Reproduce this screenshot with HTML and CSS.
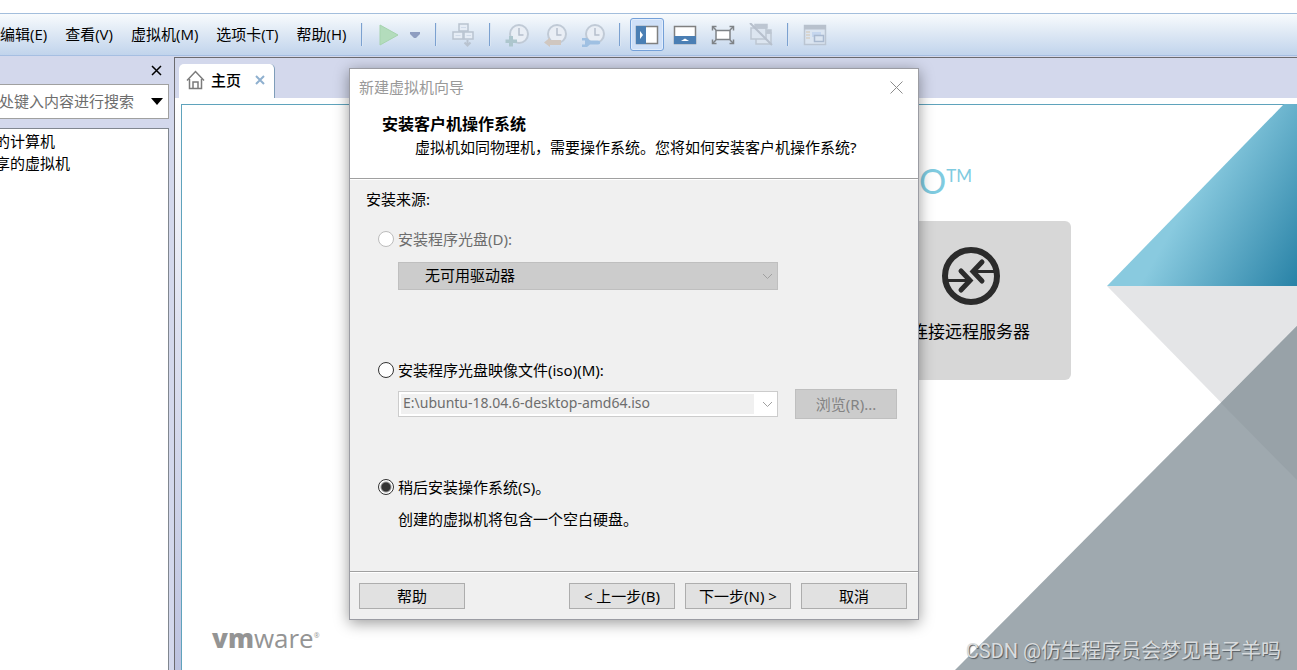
FILE: index.html
```html
<!DOCTYPE html>
<html lang="zh-CN">
<head>
<meta charset="utf-8">
<title>新建虚拟机向导</title>
<link rel="stylesheet" href="styles.css">
</head>
<body>
<div class="app">
  <header class="toolbar">
    <nav class="menu">
      <button type="button">编辑(E)</button>
      <button type="button">查看(V)</button>
      <button type="button">虚拟机(M)</button>
      <button type="button">选项卡(T)</button>
      <button type="button">帮助(H)</button>
    </nav>
    <span class="sep"></span>
    <button type="button" class="tool" aria-label="开机"><svg width="24" height="24" viewBox="0 0 24 24"><path d="M3 2L21 12L3 22Z" fill="#b3dcbc" stroke="#a6d3ae"/></svg></button>
    <button type="button" class="tool tool-caret" aria-label="电源选项"><svg width="14" height="10" viewBox="0 0 14 10"><path d="M2 2H12V4L8 8H6L2 4Z" fill="#8e9dc0"/></svg></button>
    <span class="sep"></span>
    <button type="button" class="tool" aria-label="发送按键"><svg width="24" height="24" viewBox="0 0 24 24" fill="#e6edf6" stroke="#b9c3d0" stroke-width="1.5"><rect x="8" y="1" width="9" height="7"/><rect x="2" y="9" width="10" height="7"/><rect x="13" y="9" width="9" height="7"/><path d="M16.500 17V22M13.500 19.500L16.500 22.500L19.500 19.500" fill="none" stroke-width="2"/><path d="M10 4.500H15M4.500 12.500H9.500M15.500 12.500H20" stroke="#d0dbea" stroke-width="1"/></svg></button>
    <span class="sep"></span>
    <button type="button" class="tool" aria-label="拍摄快照"><svg width="24" height="24" viewBox="0 0 24 24"><circle cx="14" cy="11" r="9" fill="#e9eef5" stroke="#c0cad6" stroke-width="2"/><path d="M14 5V12H18.500" fill="none" stroke="#b5bfcc" stroke-width="1.500"/><path d="M4 13H8V16.500H12V20H8V23.500H4V20H0.500V16.500H4Z" fill="#adc6cd"/></svg></button>
    <button type="button" class="tool" aria-label="恢复快照"><svg width="24" height="24" viewBox="0 0 24 24"><circle cx="14" cy="11" r="9" fill="#e9eef5" stroke="#c0cad6" stroke-width="2"/><path d="M14 5V12H18.500" fill="none" stroke="#b5bfcc" stroke-width="1.500"/><path d="M1 19.500L7 14.500V17H18V22H7V24Z" fill="#d0c7c0"/></svg></button>
    <button type="button" class="tool" aria-label="管理快照"><svg width="24" height="24" viewBox="0 0 24 24"><circle cx="14" cy="11" r="9" fill="#e9eef5" stroke="#c0cad6" stroke-width="2"/><path d="M14 5V12H18.500" fill="none" stroke="#b5bfcc" stroke-width="1.500"/><path d="M1 15H6L9 17.500H17C20 17.500 20 21.500 17 21.500H9L6 24H1V21.500H4V17.500H1Z" fill="#9fc0e2"/></svg></button>
    <span class="sep"></span>
    <button type="button" class="tool tool-active" aria-label="显示库"><svg width="24" height="20" viewBox="0 0 24 20"><rect x="1.500" y="1.500" width="21" height="17" fill="#fff" stroke="#808080" stroke-width="1.500"/><path d="M1 1H11V19H1Z" fill="#4b7fb4"/><path d="M5 6L8 10L5 14Z" fill="#fff"/></svg></button>
    <button type="button" class="tool" aria-label="显示缩略图"><svg width="24" height="20" viewBox="0 0 24 20"><rect x="1.500" y="1.500" width="21" height="17" fill="#fff" stroke="#808080" stroke-width="1.500"/><path d="M1 11H23V19H1Z" fill="#4b7fb4"/><path d="M8 16L12 13.500L16 16Z" fill="#fff"/></svg></button>
    <button type="button" class="tool" aria-label="全屏"><svg width="24" height="20" viewBox="0 0 24 20" fill="none" stroke="#7f8387" stroke-width="1.500"><rect x="5" y="5.500" width="14" height="9" fill="#fff"/><path d="M1.500 5.500V1.500H5.500M18.500 1.500H22.500V5.500M22.500 14.500V18.500H18.500M5.500 18.500H1.500V14.500"/><path d="M2 2L5 5M22 2L19 5M22 18L19 15M2 18L5 15"/></svg></button>
    <button type="button" class="tool" aria-label="Unity"><svg width="24" height="24" viewBox="0 0 24 24" fill="#dce5f0" stroke="#bdc6d2" stroke-width="1.500"><rect x="7" y="10" width="15" height="11"/><rect x="2" y="5" width="15" height="11"/><path d="M6 1.500H18V5H6ZM18 7H22V10H18Z" fill="#bdc6d2"/><path d="M1 0L23 22" stroke="#b7c0cd" stroke-width="2"/></svg></button>
    <span class="sep"></span>
    <button type="button" class="tool" aria-label="控制台视图"><svg width="24" height="22" viewBox="0 0 24 22"><rect x="1.500" y="1.500" width="21" height="19" fill="#dbe5f1" stroke="#bbc5d2" stroke-width="1.500"/><path d="M1 1H23V5.500H1Z" fill="#b8c1cd"/><path d="M3 8H7M3 11H7M3 14H7" stroke="#d7cfc5" stroke-width="1.500"/><path d="M9 8H18V13H9Z" fill="#c5d6ee"/><rect x="11.500" y="11.500" width="9" height="6" fill="#dbe5f1" stroke="#a9b9cf" stroke-width="1.500"/></svg></button>
  </header>

  <div class="workspace">
    <aside class="library">
      <div class="library-head">
        <button type="button" class="library-close" aria-label="关闭库"><svg width="11" height="11" viewBox="0 0 11 11"><path d="M1 1L10 10M10 1L1 10" stroke="#000" stroke-width="1.500"/></svg></button>
      </div>
      <div class="search">
        <input type="text" placeholder="处键入内容进行搜索" aria-label="搜索">
        <button type="button" aria-label="搜索选项"><svg width="12" height="7" viewBox="0 0 12 7"><path d="M0 0H12L6 7Z" fill="#000"/></svg></button>
      </div>
      <ul class="tree">
        <li>的计算机</li>
        <li>享的虚拟机</li>
      </ul>
    </aside>

    <main class="stage">
      <div class="tabs">
        <div class="tab">
          <svg width="19" height="20" viewBox="0 0 19 20" fill="none" stroke="#7b7b7b" stroke-width="1.500"><path d="M1 10.500L9.500 1.500L18 10.500"/><path d="M3.500 9V18.500H15.500V9M7 18.500V12H12V18.500"/></svg>
          <span class="tab-name">主页</span>
          <button type="button" aria-label="关闭选项卡"><svg width="10" height="10" viewBox="0 0 10 10"><path d="M1 1L9 9M9 1L1 9" stroke="#8fb0cf" stroke-width="2"/></svg></button>
        </div>
      </div>
      <div class="page-frame">
        <section class="home">
          <svg class="art" width="342" height="566" viewBox="0 0 342 566">
            <defs>
              <linearGradient id="blue" gradientUnits="userSpaceOnUse" x1="225" y1="110" x2="350" y2="180">
                <stop offset="0" stop-color="#89cadf"/>
                <stop offset="1" stop-color="#247fa4"/>
              </linearGradient>
            </defs>
            <path d="M152 182L329 0H342V182Z" fill="url(#blue)"/>
            <path d="M152 182H342V376Z" fill="#e4e5e7"/>
            <path d="M0 566L342 222V566Z" fill="#9fa9af"/>
            <path d="M266 299L342 222V376Z" fill="#98a2a8"/>
          </svg>
          <div class="product">O<span>TM</span></div>
          <button type="button" class="card">
            <svg width="60" height="60" viewBox="0 0 60 60" fill="none" stroke="#2b2b2b"><circle cx="30" cy="30" r="26" stroke-width="6"/><path d="M7 34.500H27M53 25.500H33" stroke-width="3"/><path d="M20 25L29 34.500L20 44" stroke-width="5" stroke-linecap="round"/><path d="M41 16L32 25.500L41 35" stroke-width="5" stroke-linecap="round"/></svg>
            <span>连接远程服务器</span>
          </button>
          <div class="brand"><b>vm</b>ware<sup>®</sup></div>
        </section>
      </div>
    </main>
  </div>

  <section class="dialog" role="dialog" aria-labelledby="dialog-title">
    <div class="dialog-bar">
      <span id="dialog-title">新建虚拟机向导</span>
      <button type="button" aria-label="关闭"><svg width="13" height="13" viewBox="0 0 13 13"><path d="M0.500 0.500L12.500 12.500M12.500 0.500L0.500 12.500" stroke="#8c8c8c"/></svg></button>
    </div>
    <div class="dialog-head">
      <h1>安装客户机操作系统</h1>
      <p>虚拟机如同物理机，需要操作系统。您将如何安装客户机操作系统?</p>
    </div>
    <form class="dialog-body">
      <p class="source">安装来源:</p>
      <div class="option">
        <label class="choice choice-off"><input type="radio" name="source" disabled>安装程序光盘(D):</label>
        <div class="drive">
          <select disabled aria-label="驱动器"><option>无可用驱动器</option></select>
          <svg width="11" height="7" viewBox="0 0 11 7"><path d="M1 1L5.500 5.500L10 1" fill="none" stroke="#a0a0a0"/></svg>
        </div>
      </div>
      <div class="option option-iso">
        <label class="choice"><input type="radio" name="source">安装程序光盘映像文件(iso)(M):</label>
        <div class="file-row">
          <div class="path">
            <input type="text" value="E:\ubuntu-18.04.6-desktop-amd64.iso" disabled aria-label="映像文件">
            <button type="button" disabled aria-label="最近的文件"><svg width="11" height="7" viewBox="0 0 11 7"><path d="M1 1L5.500 5.500L10 1" fill="none" stroke="#a0a0a0"/></svg></button>
          </div>
          <button type="button" class="browse" disabled>浏览(R)...</button>
        </div>
      </div>
      <div class="option option-later">
        <label class="choice"><input type="radio" name="source" checked>稍后安装操作系统(S)。</label>
        <p class="note">创建的虚拟机将包含一个空白硬盘。</p>
      </div>
    </form>
    <div class="dialog-foot">
      <button type="button" class="help">帮助</button>
      <button type="button">&lt; 上一步(B)</button>
      <button type="button">下一步(N) &gt;</button>
      <button type="button">取消</button>
    </div>
  </section>

  <div class="watermark">CSDN @仿生程序员会梦见电子羊吗</div>
</div>
</body>
</html>
```
FILE: styles.css
```css
* { box-sizing: border-box; }

body {
  margin: 0;
  font: 15px/20px "Open Sans", "Noto Sans CJK SC", sans-serif;
  color: #000;
  background: #fff;
}

button, input, select { font: inherit; color: inherit; }
button { padding: 0; border: 0; background: none; }
p, h1, ul { margin: 0; padding: 0; }
svg { display: block; flex: none; }

.app {
  position: relative;
  display: flex;
  flex-direction: column;
  min-height: 100vh;
  padding-top: 13px;
  overflow: hidden;
}

/* Menu and tools */
.toolbar {
  display: flex;
  align-items: center;
  height: 43px;
  border-top: 1px solid #a3bedc;
  border-bottom: 1px solid #a6bfe2;
  background: linear-gradient(#f8fbfd, #dce7f4 50%, #c1d4ec);
}
.menu {
  display: flex;
  flex: none;
  gap: 18px;
  margin-right: 8px;
  padding-bottom: 2px;
  white-space: nowrap;
}
.sep {
  flex: none;
  width: 2px;
  height: 23px;
  margin: 0 7px;
  background: linear-gradient(90deg, #7ba1d0 50%, #dbe6f3 50%);
}
.tool {
  display: flex;
  flex: none;
  align-items: center;
  justify-content: center;
  width: 38px;
  height: 33px;
}
.tool-caret { width: 20px; justify-content: flex-start; }
.tool-active {
  width: 34px;
  margin: 0 2px;
  border: 1px solid #74a0d8;
  border-radius: 3px;
  background: #cfe0f8;
  box-shadow: inset 0 0 0 1px #e2edfb;
}

.workspace { display: flex; flex: 1; background: #d3d8ec; }

/* Library */
.library {
  display: flex;
  flex: none;
  flex-direction: column;
  width: 169px;
}
.library-head {
  display: flex;
  align-items: center;
  justify-content: flex-end;
  height: 28px;
  padding-right: 7px;
}
.search {
  display: flex;
  height: 35px;
  border: 1px solid #a0a0a0;
  border-left: 0;
  background: #fff;
}
.search input {
  flex: 1;
  min-width: 0;
  padding: 0 0 2px;
  border: 0;
  margin-left: -1px;
  background: none;
}
.search input::placeholder { color: #6d6d6d; opacity: 1; }
.search button { padding: 0 5px; }
.tree {
  flex: 1;
  margin-top: 9px;
  padding-top: 1px;
  border: 1px solid #80868f;
  border-width: 1px 1px 0 0;
  background: #fff;
  list-style: none;
  line-height: 22px;
}
.tree li { margin-left: -5px; }

/* Main area */
.stage {
  display: flex;
  flex: 1;
  flex-direction: column;
  min-width: 0;
  margin: 1px 0 0 5px;
  border: 1px solid #6b6b6f;
  border-width: 1px 0 0 1px;
}
.tabs { padding: 6px 4px 0; }
.tab {
  display: flex;
  align-items: center;
  width: 96px;
  height: 34px;
  padding: 0 9px 2px 7px;
  border-right: 1px solid #7f9db9;
  border-radius: 5px 5px 0 0;
  background: #fff;
}
.tab-name { margin: 0 auto 0 6px; font-weight: 500; }
.page-frame {
  display: flex;
  flex: 1;
  padding: 6px 0 0 6px;
  background: linear-gradient(#fff 6px, transparent 6px), linear-gradient(#fff, #dfe2f1 40%, #bcc2df);
}
.home {
  position: relative;
  display: flex;
  flex: 1;
  flex-direction: column;
  align-items: flex-end;
  padding: 58px 226px 14px 30px;
  border: 1px solid #5fa3bc;
  border-width: 1px 0 0 1px;
  background: #fff;
}
.art { position: absolute; right: 0; top: -1px; }
.product {
  display: flex;
  margin-right: 99px;
  font: 34px/36px Lato, sans-serif;
  color: #7fcbe0;
}
.product span { font-size: 17px; line-height: 26px; }
.card {
  display: flex;
  flex-direction: column;
  align-items: center;
  gap: 14px;
  width: 201px;
  height: 159px;
  margin-top: 22px;
  padding-top: 25px;
  border-radius: 6px;
  background: #d7d7d7;
  font-size: 17px;
  line-height: 24px;
}
.brand {
  align-self: flex-start;
  margin-top: auto;
  font: 26px/36px "Open Sans", sans-serif;
  color: #949494;
}
.brand b { font-weight: 800; }
.brand sup { font-size: 7px; line-height: 8px; vertical-align: 10px; }

/* Wizard window */
.dialog {
  position: absolute;
  left: 349px;
  top: 68px;
  width: 570px;
  border: 1px solid #9b9ca3;
  background: #f0f0f0;
  box-shadow: 0 3px 14px rgba(0, 0, 0, .4);
  font-family: "Noto Sans", "Noto Sans CJK SC", sans-serif;
}
.dialog-bar {
  display: flex;
  align-items: center;
  justify-content: space-between;
  height: 36px;
  padding: 0 15px 0 9px;
  background: #fff;
  color: #999;
}
.dialog-head {
  height: 74px;
  padding: 8px 32px 0;
  border-bottom: 1px solid #a0a0a0;
  background: #fff;
  line-height: 22px;
}
.dialog-head h1 { font-size: 16px; line-height: 23px; }
.dialog-head p { padding-left: 33px; white-space: nowrap; }
.dialog-body {
  padding: 9px 21px 42px 28px;
  border-top: 1px solid #fff;
}
.source { margin: 0 0 20px -12px; }
.choice { display: flex; align-items: center; gap: 4px; }
.choice input {
  appearance: none;
  width: 16px;
  height: 16px;
  margin: 0;
  border: 1px solid #333;
  border-radius: 50%;
  background: #fff;
}
.choice input:checked { background: radial-gradient(circle, #333 4px, #fff 6px); }
.choice-off { color: #6d6d6d; }
.choice-off input { border-color: #bcbcbc; }
.drive {
  display: grid;
  align-items: center;
  width: 380px;
  margin: 13px 0 0 20px;
}
.drive select, .drive svg { grid-area: 1 / 1; }
.drive svg { justify-self: end; margin-right: 5px; }
.drive select {
  appearance: none;
  width: 100%;
  height: 28px;
  padding: 0 26px 2px;
  border: 1px solid #bfbfbf;
  border-radius: 0;
  background: #ccc;
  color: #000;
  opacity: 1;
}
.option-iso { margin-top: 70px; }
.file-row {
  display: flex;
  align-items: center;
  justify-content: space-between;
  margin: 9px 0 0 20px;
}
.path {
  display: flex;
  width: 380px;
  height: 26px;
  padding: 2px;
  border: 1px solid #ccc;
  background: #fff;
}
.path input {
  flex: 1;
  min-width: 0;
  padding: 0 2px 2px;
  border: 0;
  background: #f0f0f0;
  color: #6d6d6d;
  font-size: 14px;
}
.path button { padding: 0 2px 0 8px; }
.browse {
  width: 102px;
  height: 30px;
  border: 1px solid #bfbfbf;
  background: #ccc;
  color: #838383;
}
.option-later { margin-top: 58px; }
.note { margin: 12px 0 0 20px; }
.dialog-foot {
  display: flex;
  gap: 10px;
  padding: 11px 11px 10px 9px;
  border-top: 1px solid #a0a0a0;
  box-shadow: inset 0 1px #fff;
}
.dialog-foot button {
  width: 106px;
  height: 26px;
  border: 1px solid #adadad;
  background: #e1e1e1;
}
.dialog-foot .help { margin-right: auto; }

.watermark {
  position: absolute;
  right: 16px;
  bottom: 5px;
  font: 20px/28px Roboto, "Noto Sans CJK SC", sans-serif;
  color: #d9dcde;
  text-shadow: 1px 1px 1px #555b60;
}
```
